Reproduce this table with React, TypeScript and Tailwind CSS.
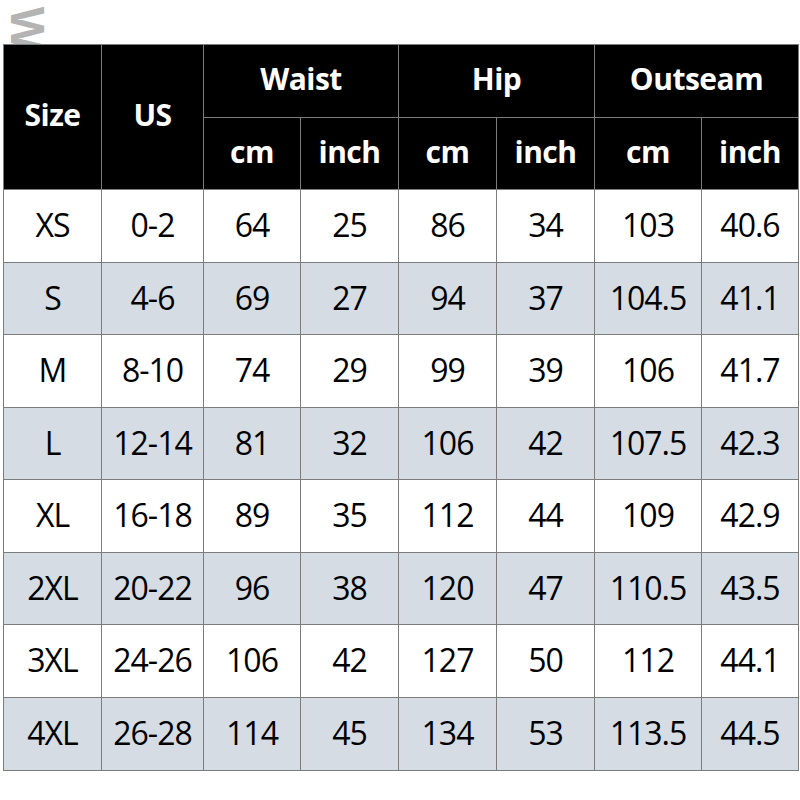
import React from 'react';

const rows: string[][] = [
	['XS', '0-2', '64', '25', '86', '34', '103', '40.6'],
	['S', '4-6', '69', '27', '94', '37', '104.5', '41.1'],
	['M', '8-10', '74', '29', '99', '39', '106', '41.7'],
	['L', '12-14', '81', '32', '106', '42', '107.5', '42.3'],
	['XL', '16-18', '89', '35', '112', '44', '109', '42.9'],
	['2XL', '20-22', '96', '38', '120', '47', '110.5', '43.5'],
	['3XL', '24-26', '106', '42', '127', '50', '112', '44.1'],
	['4XL', '26-28', '114', '45', '134', '53', '113.5', '44.5'],
];

const head = 'flex items-center justify-center pb-[5px] bg-black text-white font-bold text-[30px] tracking-[-0.5px]';

export default function App() {
	return (
		<div className="w-[800px] h-[800px] bg-white font-['Open_Sans',sans-serif]">
			{/* watermark letter, cut by the table top */}
			<div className="h-[44px] overflow-hidden pl-[8px]">
				<div className="w-[40px] h-[44px] flex items-start justify-center">
					<span className="block rotate-90 origin-center text-[46px] leading-none font-bold text-[#b4b4b4] mt-[6px] ml-[2px]">
						W
					</span>
				</div>
			</div>

			<div className="ml-[3px] w-[796px] grid grid-cols-[97px_101px_96px_97px_97px_97px_106px_96px] grid-rows-[72px_71px_72px_71px_72px_71px_72px_71px_72px_72px] gap-px p-px bg-[#7c7c7c]">
				<div className={`${head} row-span-2`}>Size</div>
				<div className={`${head} row-span-2`}>US</div>
				<div className={`${head} col-span-2`}>Waist</div>
				<div className={`${head} col-span-2`}>Hip</div>
				<div className={`${head} col-span-2`}>Outseam</div>
				<div className={head}>cm</div>
				<div className={head}>inch</div>
				<div className={head}>cm</div>
				<div className={head}>inch</div>
				<div className={head}>cm</div>
				<div className={head}>inch</div>

				{rows.map((r, i) =>
					r.map((v, j) => (
						<div
							key={`${i}-${j}`}
							className={`flex items-center justify-center pb-[2px] text-black text-[32px] tracking-[-1px] ${
								i % 2 === 1 ? 'bg-[#d6dce4]' : 'bg-white'
							}`}
						>
							{v}
						</div>
					))
				)}
			</div>
		</div>
	);
}
